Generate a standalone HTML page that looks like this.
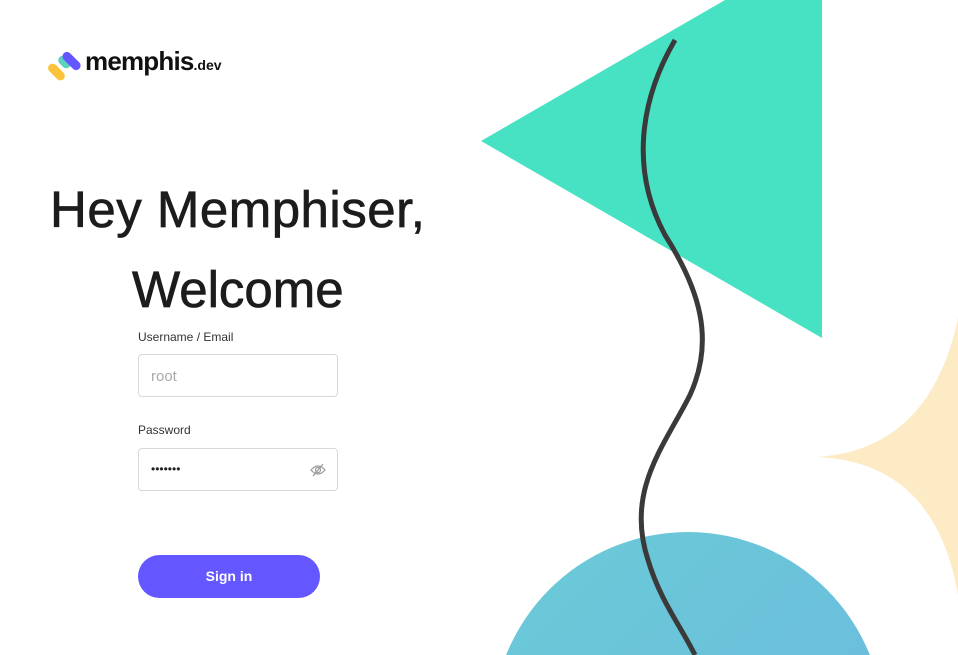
<!DOCTYPE html>
<html style="overflow:hidden"><head><meta charset="utf-8"><style>
html,body{margin:0;width:958px;height:655px;overflow:hidden}
body{background:#fff;font-family:"Liberation Sans",sans-serif;position:relative}
.abs{position:absolute}
h1{margin:0;font-weight:normal;color:#1c1c1c;position:absolute;white-space:nowrap;line-height:1;-webkit-text-stroke:0.7px #1c1c1c}
.lbl{font-size:12px;color:#333;position:absolute}
.inp{position:absolute;left:138px;width:200px;height:43px;border:1px solid #d8d8d8;border-radius:4px;box-sizing:border-box}
</style></head><body>
<svg class="abs" style="left:0;top:0" width="958" height="655">
<polygon points="481,141 822,-56 822,338" fill="#47e1c4"/>
<path d="M817,457 Q930,450 958,318 L958,595 Q935,462 817,457 Z" fill="#fcebc5"/>
<defs><linearGradient id="g" x1="0" y1="0" x2="1" y2="1"><stop offset="0" stop-color="#6acbd6"/><stop offset="1" stop-color="#6cb8e0"/></linearGradient></defs>
<circle cx="688" cy="728" r="196" fill="url(#g)"/>
<path d="M675,40 C640,100 630,170 665,235 C700,290 715,340 690,395 C665,445 625,490 648,560 C660,600 680,625 695,655" fill="none" stroke="#3a3a3a" stroke-width="5"/>
<g transform="translate(52,52)">
<rect x="0" y="10" width="9" height="20" rx="4.5" transform="rotate(-45 4.5 20)" fill="#fbc33a"/>
<rect x="8" y="3" width="9" height="14" rx="4.5" transform="rotate(-45 12.5 10)" fill="#5ed2bd"/>
<rect x="15" y="-2" width="9" height="22" rx="4.5" transform="rotate(-45 19.5 9)" fill="#6557ff"/>
</g>
</svg>
<div class="abs" style="left:85px;top:46px;font-size:26px;font-weight:700;color:#111;letter-spacing:-0.8px">memphis<span style="font-size:14px;font-weight:600;letter-spacing:0">.dev</span></div>
<h1 style="left:50px;top:184px;font-size:51px;letter-spacing:0.5px">Hey Memphiser,</h1>
<h1 style="left:132px;top:264px;font-size:51px">Welcome</h1>
<div class="lbl" style="left:138px;top:330px">Username / Email</div>
<div class="inp" style="top:354px"><span class="abs" style="left:12px;top:13px;font-size:15px;color:#aaa">root</span></div>
<div class="lbl" style="left:138px;top:423px">Password</div>
<div class="inp" style="top:448px"><span class="abs" style="left:12px;top:13px;font-size:12px;color:#222">•••••••</span>
<svg class="abs" style="left:171px;top:14px" width="16" height="14" viewBox="0 0 16 14"><path d="M1,7 Q8,-1 15,7 Q8,15 1,7Z" fill="none" stroke="#999" stroke-width="1.2"/><circle cx="8" cy="7" r="2.5" fill="none" stroke="#999" stroke-width="1.2"/><path d="M3,13 L13,1" stroke="#999" stroke-width="1.2"/></svg></div>
<div class="abs" style="left:138px;top:555px;width:182px;height:43px;border-radius:22px;background:#6557ff;color:#fff;font-weight:700;font-size:14px;text-align:center;line-height:43px">Sign in</div>
</body></html>
